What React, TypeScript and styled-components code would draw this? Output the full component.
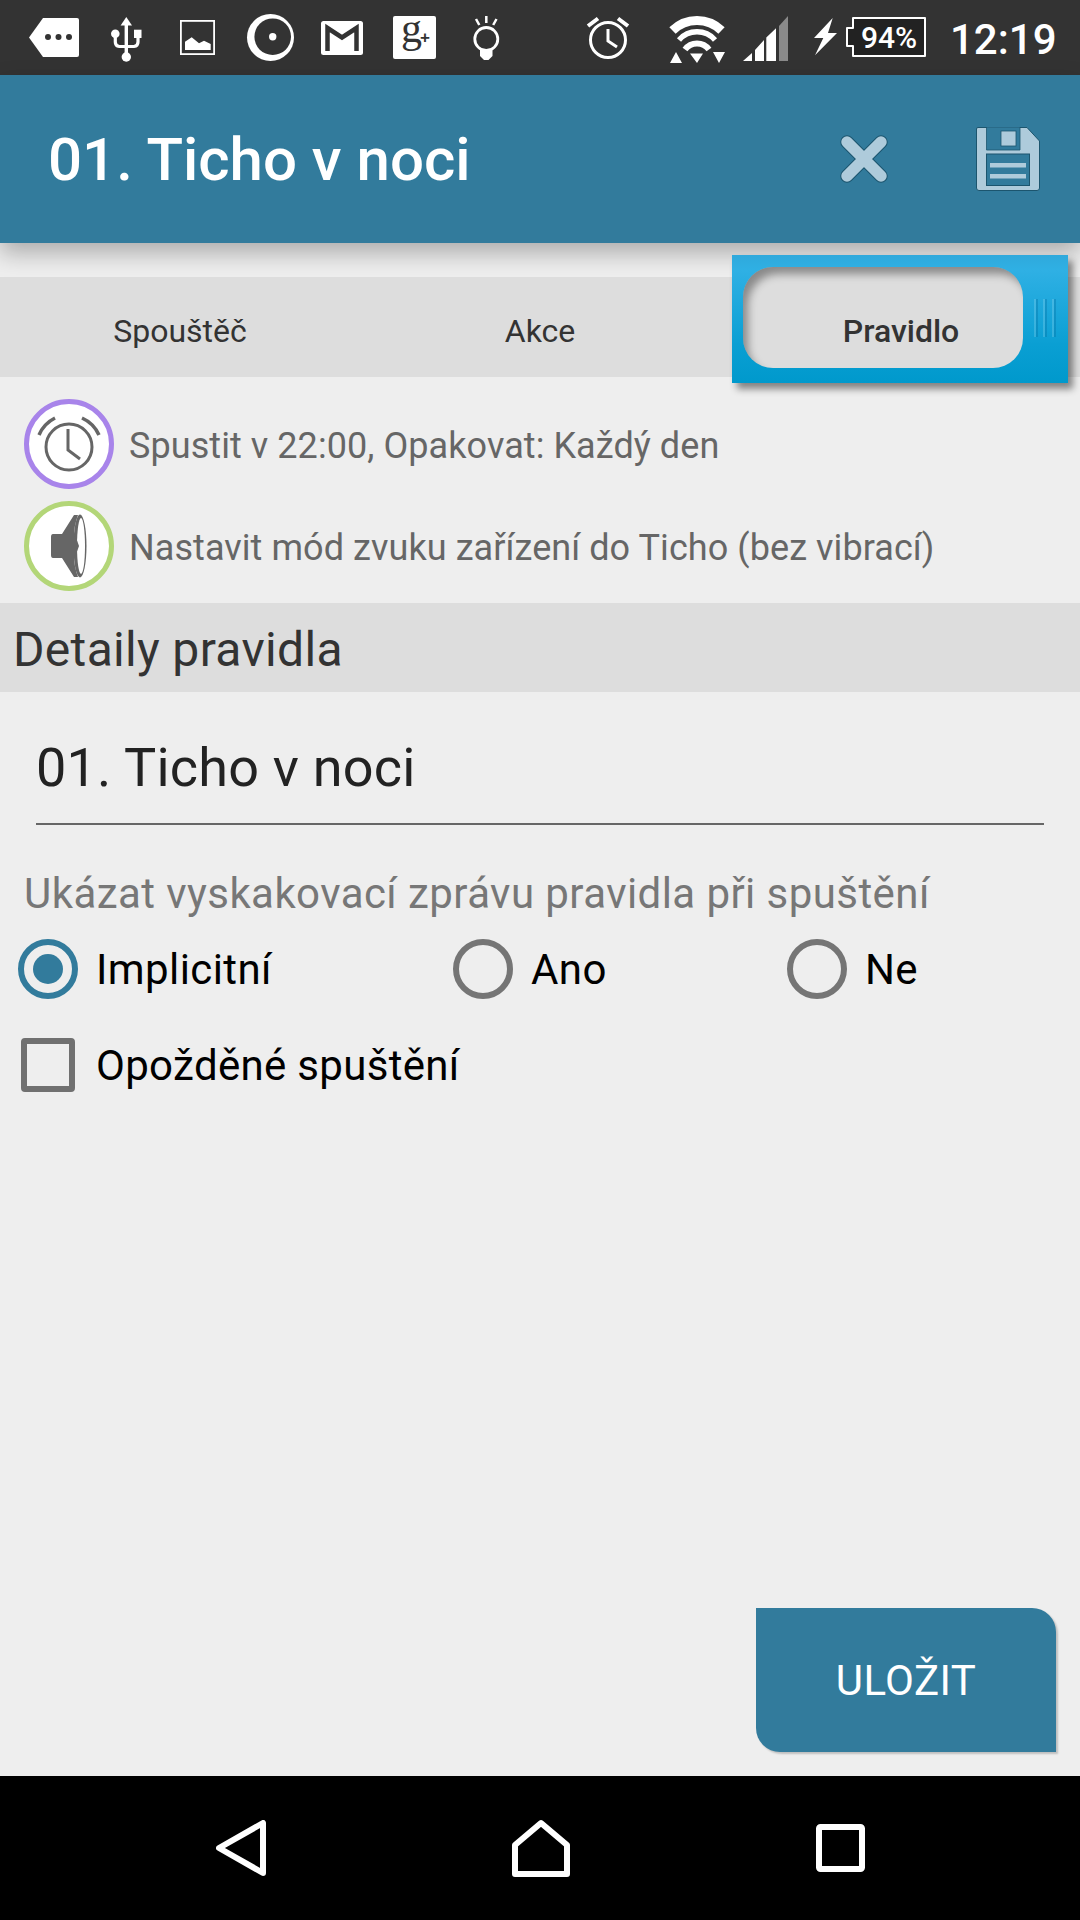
import React from "react";
import styled, { createGlobalStyle } from "styled-components";

const Global = createGlobalStyle`
  html, body { margin: 0; padding: 0; background: #eeeeee; }
  #root { width: 1080px; height: 1920px; }
  * { box-sizing: border-box; }
`;

const TEAL = "#327b9c";
const STATUS = "#333333";
const ICON_LIGHT = "#aecbdb";
const ICON_EDGE = "#1c556e";

const Screen = styled.div`
  width: 1080px;
  height: 1920px;
  display: flex;
  flex-direction: column;
  background: #eeeeee;
  font-family: Roboto, "Noto Sans", sans-serif;
  overflow: hidden;
`;

const StatusBar = styled.div`
  height: 75px;
  flex: none;
  background: ${STATUS};
  display: flex;
  align-items: flex-start;
`;

const StatusIcon = styled.svg<{ $left: number; $top: number }>`
  display: block;
  flex: none;
  overflow: visible;
  margin-left: ${(p) => p.$left}px;
  margin-top: ${(p) => p.$top}px;
`;

const Clock = styled.span`
  margin-left: 24px;
  margin-top: 15px;
  font-size: 42px;
  line-height: 49px;
  font-weight: 500;
  color: #ffffff;
`;

const Header = styled.header`
  height: 168px;
  flex: none;
  background: ${TEAL};
  display: flex;
  align-items: center;
  position: relative;
  z-index: 2;
  box-shadow: 0 10px 22px rgba(0, 0, 0, 0.28);
`;

const Title = styled.h1`
  margin: 2px 0 0 48px;
  flex: 1;
  font-size: 60px;
  line-height: 68px;
  font-weight: 500;
  color: #ffffff;
`;

const CloseIcon = styled.svg`
  display: block;
  margin-right: 88px;
  margin-bottom: 1px;
`;

const SaveIcon = styled.svg`
  display: block;
  margin-right: 40px;
  margin-bottom: 1px;
`;

const TabBar = styled.nav`
  margin-top: 34px;
  height: 100px;
  flex: none;
  background: #dddddd;
  display: grid;
  grid-template-columns: repeat(3, 360px);
  position: relative;
  z-index: 3;
`;

const Tab = styled.div`
  display: flex;
  align-items: center;
  justify-content: center;
  padding-top: 8px;
  font-size: 32px;
  color: #333333;
`;

const ActiveTab = styled.div`
  margin: -22px 12px -6px;
  padding: 12px 12px 15px 11px;
  display: flex;
  align-items: stretch;
  gap: 11px;
  background: linear-gradient(180deg, #2fa9dc 0%, #2fb0e4 12%, #0a9fd3 70%, #0099cc 100%);
  box-shadow: 5px 6px 7px rgba(0, 0, 0, 0.45);
`;

const ActiveInner = styled.div`
  flex: 1;
  display: flex;
  align-items: center;
  justify-content: center;
  padding: 26px 0 0 36px;
  border-radius: 30px;
  background: #dddddd;
  box-shadow: inset 6px 8px 8px -1px rgba(0, 0, 0, 0.38);
  font-size: 32px;
  font-weight: 500;
  color: #333333;
`;

const Grip = styled.div`
  align-self: center;
  width: 22px;
  height: 38px;
  background: repeating-linear-gradient(
    90deg,
    rgba(255, 255, 255, 0.16) 0,
    rgba(255, 255, 255, 0.16) 2px,
    rgba(0, 110, 160, 0.35) 2px,
    rgba(0, 110, 160, 0.35) 4px,
    transparent 4px,
    transparent 9px
  );
`;

const Summary = styled.section`
  height: 226px;
  flex: none;
  padding: 22px 0 0 24px;
  display: flex;
  flex-direction: column;
  gap: 12px;
`;

const SummaryRow = styled.div`
  display: flex;
  align-items: center;
  gap: 15px;
  font-size: 36px;
  letter-spacing: 0.07px;
  color: #666666;
`;

const SummaryText = styled.span`
  padding-top: 4px;
`;

const Badge = styled.div<{ $ring: string }>`
  width: 90px;
  height: 90px;
  flex: none;
  border-radius: 50%;
  border: 5px solid ${(p) => p.$ring};
  background: #ffffff;
  display: flex;
  align-items: center;
  justify-content: center;
`;

const SectionTitle = styled.div`
  height: 89px;
  flex: none;
  background: #dddddd;
  padding: 4px 0 0 13px;
  display: flex;
  align-items: center;
  font-size: 48px;
  letter-spacing: 0.33px;
  color: #333333;
`;

const Form = styled.main`
  flex: 1;
  display: flex;
  flex-direction: column;
  padding-bottom: 24px;
`;

const NameField = styled.div`
  margin: 46px 36px 0;
  height: 87px;
  border-bottom: 2px solid #666666;
  font-size: 54px;
  line-height: 60px;
  letter-spacing: 0.2px;
  color: #222222;
`;

const PopupLabel = styled.div`
  margin: 46px 0 0 24px;
  font-size: 42px;
  line-height: 46px;
  letter-spacing: 0.43px;
  color: #777777;
`;

const RadioRow = styled.div`
  margin-top: 22px;
  padding-left: 18px;
  display: grid;
  grid-template-columns: 435px 334px 1fr;
`;

const Choice = styled.div`
  display: flex;
  align-items: center;
  gap: 18px;
  font-size: 42px;
  letter-spacing: 0.4px;
  color: #000000;
`;

const Radio = styled.span<{ $on?: boolean }>`
  width: 60px;
  height: 60px;
  flex: none;
  border-radius: 50%;
  border: 6px solid ${(p) => (p.$on ? TEAL : "#757575")};
  display: flex;
  align-items: center;
  justify-content: center;
  &::after {
    content: "";
    display: ${(p) => (p.$on ? "block" : "none")};
    width: 30px;
    height: 30px;
    border-radius: 50%;
    background: ${TEAL};
  }
`;

const CheckRow = styled.div`
  margin-top: 39px;
  padding-left: 21px;
  display: flex;
  align-items: center;
  gap: 21px;
  font-size: 42px;
  letter-spacing: 0.32px;
  color: #000000;
`;

const CheckBox = styled.span`
  width: 54px;
  height: 54px;
  flex: none;
  border: 6px solid #707070;
  border-radius: 4px;
`;

const SaveButton = styled.button`
  margin: auto 24px 0 auto;
  width: 300px;
  height: 144px;
  border: 0;
  padding: 0;
  background: ${TEAL};
  color: #ffffff;
  font-family: inherit;
  font-size: 42px;
  letter-spacing: 0.4px;
  border-radius: 0 24px 0 24px;
  box-shadow: 2px 2px 2px rgba(0, 0, 0, 0.2);
`;

const NavBar = styled.footer`
  height: 144px;
  flex: none;
  background: #000000;
  display: flex;
  align-items: center;
  justify-content: center;
  gap: 246px;
`;

const NavIcon = styled.svg`
  display: block;
`;

const White = "#ffffff";

export default function App() {
  return (
    <Screen>
      <Global />
      <StatusBar>
        <StatusIcon $left={29} $top={18} width={50} height={39} viewBox="0 0 50 39">
          <path d="M14 0H48a2 2 0 0 1 2 2V37a2 2 0 0 1-2 2H14L0 19.500Z" fill={White} />
          <circle cx="19" cy="19" r="3" fill={STATUS} />
          <circle cx="29.500" cy="19" r="3" fill={STATUS} />
          <circle cx="40" cy="19" r="3" fill={STATUS} />
        </StatusIcon>
        <StatusIcon $left={32} $top={17} width={30} height={45} viewBox="0 0 30 45">
          <path d="M15.300 0L21 8.500H9.600Z" fill={White} />
          <path d="M15.300 8V40" stroke={White} strokeWidth="3.400" fill="none" />
          <circle cx="15.300" cy="40" r="4.700" fill={White} />
          <circle cx="4.300" cy="16.700" r="4.300" fill={White} />
          <rect x="23" y="12.700" width="7.500" height="8.300" fill={White} />
          <path d="M4.300 20V25Q4.300 29 8.300 29.500H15.300M27 21V25Q27 29 23 29.500H15.300" stroke={White} strokeWidth="3.200" fill="none" />
        </StatusIcon>
        <StatusIcon $left={39} $top={20} width={35} height={35} viewBox="0 0 35 35">
          <rect x=".9" y=".9" width="33.200" height="33.200" fill="none" stroke={White} strokeWidth="1.800" />
          <path d="M5 30V21.700L11.700 17.300L19 23.300L24 20.700L30.700 24V30Z" fill={White} />
        </StatusIcon>
        <StatusIcon $left={32} $top={14} width={47} height={47} viewBox="0 0 47 47">
          <circle cx="23.500" cy="23.500" r="23.500" fill={White} />
          <circle cx="25.700" cy="22.700" r="18.300" fill={STATUS} />
          <circle cx="25.700" cy="22.700" r="3.700" fill={White} />
        </StatusIcon>
        <StatusIcon $left={27} $top={21} width={42} height={34} viewBox="0 0 42 34">
          <rect width="42" height="34" rx="2.500" fill={White} />
          <path d="M6.500 30V7L21 16.500L35.500 7V30" stroke={STATUS} strokeWidth="4.500" fill="none" />
        </StatusIcon>
        <StatusIcon $left={30} $top={16} width={43} height={43} viewBox="0 0 43 43">
          <rect width="43" height="43" rx="2" fill={White} />
          <text x="8" y="26" fontFamily="'Liberation Serif', serif" fontSize="42" fill={STATUS}>g</text>
          <text x="27" y="27" fontFamily="'Liberation Sans', sans-serif" fontWeight="700" fontSize="17" fill={STATUS}>+</text>
        </StatusIcon>
        <StatusIcon $left={37} $top={16} width={27} height={44} viewBox="0 0 27 44">
          <circle cx="13.300" cy="23" r="11.500" fill="none" stroke={White} strokeWidth="2.800" />
          <path d="M7 33H19.500V40L15.500 44H11L7 40Z" fill={White} />
          <path d="M13.300 0V7M3 3L6.300 9M23.500 3L20.200 9" stroke={White} strokeWidth="2.500" />
        </StatusIcon>
        <StatusIcon $left={87} $top={16} width={42} height={43} viewBox="0 0 42 43">
          <circle cx="21" cy="24" r="17.500" fill="none" stroke={White} strokeWidth="3" />
          <path d="M21 13V25L30 31" fill="none" stroke={White} strokeWidth="3" />
          <path d="M1 10L11 2.500M41 10L31 2.500" stroke={White} strokeWidth="4" />
        </StatusIcon>
        <StatusIcon $left={39} $top={16} width={58} height={48} viewBox="0 0 58 48">
          <path d="M4.500 14.500A35 35 0 0 1 53.500 14.500" fill="none" stroke={White} strokeWidth="9" />
          <path d="M11 24A24 24 0 0 1 47 24" fill="none" stroke={White} strokeWidth="5.500" />
          <path d="M17 33.500A15 15 0 0 1 41 33.500" fill="none" stroke={White} strokeWidth="6" />
          <path d="M22 37.500H35L29 47Z M8 36L14 47H2Z M45 36H57L51 47Z" fill={White} />
        </StatusIcon>
        <StatusIcon $left={17} $top={16} width={45} height={45} viewBox="0 0 45 45">
          <path d="M0 45L9 37V45Z M12 34L21 24V45H12Z M23.300 21.500L33 12.300V45H23.300Z" fill={White} />
          <path d="M36 10L45 0V45H36Z" fill="#8a8a8a" />
        </StatusIcon>
        <StatusIcon $left={26} $top={18} width={23} height={38} viewBox="0 0 23 38">
          <path d="M18.700 0L0 20H9.300L1 37.300L23 15H14Z" fill={White} />
        </StatusIcon>
        <StatusIcon $left={8} $top={17} width={81} height={40} viewBox="0 0 81 40">
          <path d="M8 1H80V39H8V29H2V11H8Z" fill="#222222" stroke={White} strokeWidth="2" strokeLinejoin="round" />
          <text x="16" y="31" fontFamily="Roboto, sans-serif" fontWeight="500" fontSize="30" fill={White}>94%</text>
        </StatusIcon>
        <Clock>12:19</Clock>
      </StatusBar>

      <Header>
        <Title>01. Ticho v noci</Title>
        <CloseIcon width={48} height={48} viewBox="0 0 48 48">
          <path d="M7 7L41 41M41 7L7 41" stroke={ICON_EDGE} strokeWidth="13.500" strokeLinecap="round" fill="none" />
          <path d="M7 7L41 41M41 7L7 41" stroke={ICON_LIGHT} strokeWidth="11.500" strokeLinecap="round" fill="none" />
        </CloseIcon>
        <SaveIcon width={64} height={64} viewBox="0 0 64 64">
          <path d="M2 .5H51L63.500 14V61a2.500 2.500 0 0 1-2.500 2.500H3a2.500 2.500 0 0 1-2.500-2.500V2A1.500 1.500 0 0 1 2 .5Z" fill={ICON_LIGHT} stroke={ICON_EDGE} strokeWidth="1" />
          <path d="M10.500 0V23H44V0Z" fill={TEAL} stroke={ICON_EDGE} strokeWidth=".8" />
          <rect x="25" y="4" width="15" height="15" fill={ICON_LIGHT} stroke={ICON_EDGE} strokeWidth=".8" />
          <rect x="10.500" y="27" width="43" height="31.500" fill={TEAL} stroke={ICON_EDGE} strokeWidth="1" />
          <rect x="14" y="36" width="36" height="4.500" fill={ICON_LIGHT} />
          <rect x="14" y="47" width="36" height="4.500" fill={ICON_LIGHT} />
        </SaveIcon>
      </Header>

      <TabBar>
        <Tab>Spouštěč</Tab>
        <Tab>Akce</Tab>
        <ActiveTab>
          <ActiveInner>Pravidlo</ActiveInner>
          <Grip />
        </ActiveTab>
      </TabBar>

      <Summary>
        <SummaryRow>
          <Badge $ring="#a884ea">
            <svg width="80" height="80" viewBox="5 5 80 80">
              <circle cx="45" cy="48" r="23" fill="none" stroke="#666666" strokeWidth="3" />
              <path d="M44 30V51L56 60" fill="none" stroke="#666666" strokeWidth="3" />
              <path d="M15 36A34 34 0 0 1 31 19M75 36A34 34 0 0 0 58 19" fill="none" stroke="#666666" strokeWidth="3.500" />
            </svg>
          </Badge>
          <SummaryText>Spustit v 22:00, Opakovat: Každý den</SummaryText>
        </SummaryRow>
        <SummaryRow>
          <Badge $ring="#b3d678">
            <svg width="80" height="80" viewBox="5 5 80 80">
              <ellipse cx="56" cy="45" rx="6.500" ry="31.500" fill="#666666" />
              <ellipse cx="57" cy="45" rx="4" ry="28" fill="#ffffff" />
              <path d="M29 33H38L50 14H54Q50 25 50 35Q54 40 55 45Q54 50 50 55Q50 65 54 76H50L38 57H29Q27 57 27 54V36Q27 33 29 33Z" fill="#666666" />
            </svg>
          </Badge>
          <SummaryText>Nastavit mód zvuku zařízení do Ticho (bez vibrací)</SummaryText>
        </SummaryRow>
      </Summary>

      <SectionTitle>Detaily pravidla</SectionTitle>

      <Form>
        <NameField>01. Ticho v noci</NameField>
        <PopupLabel>Ukázat vyskakovací zprávu pravidla při spuštění</PopupLabel>
        <RadioRow>
          <Choice><Radio $on />Implicitní</Choice>
          <Choice><Radio />Ano</Choice>
          <Choice><Radio />Ne</Choice>
        </RadioRow>
        <CheckRow><CheckBox />Opožděné spuštění</CheckRow>
        <SaveButton>ULOŽIT</SaveButton>
      </Form>

      <NavBar>
        <NavIcon width={50} height={56} viewBox="0 0 50 56">
          <path d="M47 3V53L3 28Z" fill="none" stroke={White} strokeWidth="6" strokeLinejoin="round" />
        </NavIcon>
        <NavIcon width={58} height={58} viewBox="0 0 58 58">
          <path d="M3 55V26L29 4L55 26V55Z" fill="none" stroke={White} strokeWidth="6" strokeLinejoin="round" />
        </NavIcon>
        <NavIcon width={49} height={48} viewBox="0 0 49 48">
          <rect x="3" y="3" width="43" height="42" rx="1.500" fill="none" stroke={White} strokeWidth="6" />
        </NavIcon>
      </NavBar>
    </Screen>
  );
}
